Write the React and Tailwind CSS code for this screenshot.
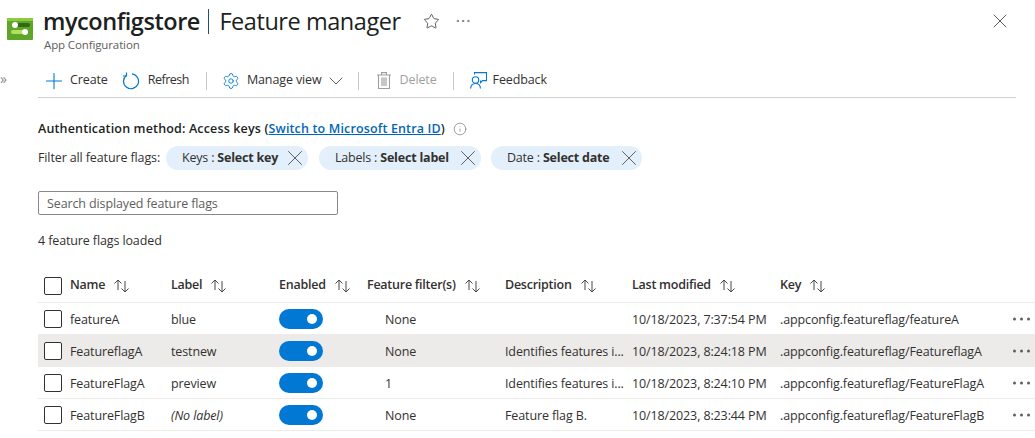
import React from 'react';
import { Plus, Settings, ChevronDown, Star, X, Ellipsis, Info } from 'lucide-react';

const rowGrid = 'grid grid-cols-[32px_101px_108px_88px_138px_127px_148px_232px_23px] items-center';

const flags = [
  { name: 'featureA', label: 'blue', filter: 'None', desc: '', modified: '10/18/2023, 7:37:54 PM', key: '.appconfig.featureflag/featureA' },
  { name: 'FeatureflagA', label: 'testnew', filter: 'None', desc: 'Identifies features i...', modified: '10/18/2023, 8:24:18 PM', key: '.appconfig.featureflag/FeatureflagA', hover: true },
  { name: 'FeatureFlagA', label: 'preview', filter: '1', desc: 'Identifies features i...', modified: '10/18/2023, 8:24:10 PM', key: '.appconfig.featureflag/FeatureFlagA' },
  { name: 'FeatureFlagB', label: '(No label)', italic: true, filter: 'None', desc: 'Feature flag B.', modified: '10/18/2023, 8:23:44 PM', key: '.appconfig.featureflag/FeatureFlagB' },
];

const columns = ['Name', 'Label', 'Enabled', 'Feature filter(s)', 'Description', 'Last modified', 'Key'];

function SortArrows() {
  return (
    <svg width="17" height="14" viewBox="0 0 17 14" fill="none" stroke="#484644" strokeWidth="1" className="shrink-0">
      <path d="M5 11V1M1.500 4.500 5 1l3.500 3.500" />
      <path d="M12 2v11M8.500 9.500 12 13l3.500-3.500" />
    </svg>
  );
}

function AppIcon() {
  return (
    <svg width="26" height="22" viewBox="0 0 26 22" className="shrink-0">
      <rect width="26" height="22" rx="1" fill="#5ea52a" />
      <rect y="0" width="26" height="3" fill="#8fc93f" />
      <rect x="8" y="5" width="15" height="4" rx="2" fill="#2f6b12" />
      <rect x="4" y="12" width="17" height="4" rx="2" fill="#b5e05a" />
      <circle cx="8" cy="7" r="3" fill="#fff" />
      <circle cx="18" cy="14" r="3" fill="#fff" />
    </svg>
  );
}

function RefreshIcon() {
  return (
    <svg width="18" height="18" viewBox="0 0 18 18" fill="none" stroke="#0078d4" strokeWidth="1.200" className="ml-[14px]">
      <path d="M10 1.800A7.500 7.500 0 1 1 4.200 3.500" />
      <path d="M4.500 0.500v3.500H1" />
    </svg>
  );
}

function TrashIcon() {
  return (
    <svg width="14" height="17" viewBox="0 0 14 17" fill="none" stroke="#a19f9d" strokeWidth="1.100" className="ml-[18px]">
      <path d="M0 3h14M4.500 3V0.600h5V3" />
      <path d="M1.500 3v13.500h11V3" />
      <rect x="4" y="5.500" width="6" height="8.500" fill="#c8c6c4" stroke="none" />
    </svg>
  );
}

function FeedbackIcon() {
  return (
    <svg width="17" height="17" viewBox="0 0 17 17" fill="none" stroke="#0078d4" strokeWidth="1.100" className="ml-[16px]">
      <circle cx="5.500" cy="8" r="3.200" />
      <path d="M0.600 16.500c0-3 2-5 4.900-5s4.900 2 4.900 5" />
      <path d="M4.500 2.500V0.600h12v8h-4l-2 2v-2" />
    </svg>
  );
}

function Checkbox() {
  return <div className="w-[18px] h-[18px] border border-[#323130] rounded-[2px] bg-white" />;
}

function Toggle() {
  return (
    <div className="w-[44px] h-[20px] rounded-full bg-[#0078d4] flex items-center justify-end pr-[6px]">
      <div className="w-[10px] h-[10px] rounded-full bg-white" />
    </div>
  );
}

function RowDots() {
  return (
    <svg width="17" height="4" viewBox="0 0 17 4" fill="#605e5c" className="ml-[1px]">
      <circle cx="1.500" cy="2" r="1.500" />
      <circle cx="8.500" cy="2" r="1.500" />
      <circle cx="15.500" cy="2" r="1.500" />
    </svg>
  );
}

function Pill({ name, value, width }) {
  return (
    <div className={`h-[24px] rounded-full bg-[#e3f0fb] flex items-center justify-between pl-[16px] ${width}`}>
      <span className="tracking-[-0.2px] text-[#323130]">
        {name} : <span className="font-bold">{value}</span>
      </span>
      <X size={26} strokeWidth={0.7} color="#323130" />
    </div>
  );
}

function Divider() {
  return <div className="w-px h-[18px] bg-[#c8c6c4]" />;
}

export default function App() {
  return (
    <div className="w-[1035px] h-[438px] bg-white overflow-hidden flex font-['Open_Sans',sans-serif] text-[#323130] text-[12.500px] tracking-[-0.12px]">
      {/* collapsed nav */}
      <div className="w-[38px] shrink-0 pt-[71px] text-[#8a8886] text-[14px] leading-[16px]">»</div>

      <div className="flex-1 min-w-0">
        {/* title bar */}
        <div className="h-[64px] flex items-start pr-[23px] relative">
          <div className="absolute -left-[31px] top-[18px]">
            <AppIcon />
          </div>
          <div className="pl-[5px] pt-[5px]">
            <div className="flex items-center text-[23.500px] leading-[32px] text-[#201f1e] tracking-[-0.45px] whitespace-nowrap">
              <span className="font-semibold">myconfigstore</span>
              <span className="ml-[8px] mr-[10px] w-[1.500px] h-[25px] bg-[#1f4e79]" />
              <span>Feature manager</span>
              <Star size={17} strokeWidth={1.100} color="#323130" className="ml-[22px]" />
              <Ellipsis size={18} strokeWidth={1} color="#605e5c" className="ml-[14px]" />
            </div>
            <div className="text-[11.500px] leading-[14px] mt-[1px] ml-[1px] text-[#605e5c]">App Configuration</div>
          </div>
          <X size={24} strokeWidth={0.8} color="#323130" className="ml-auto mt-[9px]" />
        </div>

        {/* command bar */}
        <div className="h-[34px] w-[978px] border-b border-[#d2d0ce] flex items-center whitespace-nowrap">
          <Plus size={26} strokeWidth={1} color="#0078d4" className="ml-[2.500px]" />
          <span className="ml-[3.500px]">Create</span>
          <RefreshIcon />
          <span className="ml-[8px] tracking-[-0.5px]">Refresh</span>
          <div className="ml-[17px]"><Divider /></div>
          <Settings size={18} strokeWidth={1.200} color="#0078d4" className="ml-[15px]" />
          <span className="ml-[7px]">Manage view</span>
          <ChevronDown size={24} strokeWidth={0.8} color="#323130" className="ml-[2px]" />
          <div className="ml-[10px]"><Divider /></div>
          <TrashIcon />
          <span className="ml-[9px] text-[#a19f9d]">Delete</span>
          <div className="ml-[16px]"><Divider /></div>
          <FeedbackIcon />
          <span className="ml-[6px]">Feedback</span>
        </div>

        {/* auth + filters */}
        <div className="mt-[22px] h-[18px] flex items-center whitespace-nowrap font-semibold text-[#201f1e] tracking-[0.15px]">
          Authentication method: Access keys (
          <span className="text-[#0067b8] underline">Switch to Microsoft Entra ID</span>)
          <Info size={14} strokeWidth={1} color="#605e5c" className="ml-[8px]" />
        </div>
        <div className="mt-[8px] flex items-center whitespace-nowrap">
          <span className="w-[128px] shrink-0">Filter all feature flags:</span>
          <div className="flex">
            <Pill name="Keys" value="Select key" width="w-[142px]" />
            <div className="w-[11px]" />
            <Pill name="Labels" value="Select label" width="w-[162px]" />
            <div className="w-[10px]" />
            <Pill name="Date" value="Select date" width="w-[151px]" />
          </div>
        </div>

        <input
          readOnly
          placeholder="Search displayed feature flags"
          className="mt-[21px] block w-[300px] h-[24px] border border-[#8a8886] rounded-[2px] px-[8px] placeholder:text-[#605e5c] outline-none"
        />

        <div className="mt-[17px] h-[18px] leading-[18px]">4 feature flags loaded</div>

        {/* table */}
        <div className="mt-[20px]">
          <div className={`${rowGrid} h-[33px] border-b border-[#edebe9] pb-[1px] font-semibold tracking-[-0.25px]`}>
            <div className="pl-[6px]"><Checkbox /></div>
            {columns.map((title) => (
              <div key={title} className="flex items-center gap-[8px] whitespace-nowrap">
                {title}
                <SortArrows />
              </div>
            ))}
          </div>
          {flags.map((f) => (
            <div key={f.key} className={`${rowGrid} h-[32px] pt-[1px] border-b border-[#edebe9] whitespace-nowrap ${f.hover ? 'bg-[#edebe9]' : ''}`}>
              <div className="pl-[6px]"><Checkbox /></div>
              <div className="pt-[2px]">{f.name}</div>
              <div className={f.italic ? 'italic pt-[2px]' : 'pt-[2px]'}>{f.label}</div>
              <div><Toggle /></div>
              <div className="pl-[18px] pt-[2px]">{f.filter}</div>
              <div className="pt-[2px]">{f.desc}</div>
              <div className="pt-[2px]">{f.modified}</div>
              <div className="pt-[2px]">{f.key}</div>
              <div className="flex items-center"><RowDots /></div>
            </div>
          ))}
        </div>
      </div>
    </div>
  );
}
